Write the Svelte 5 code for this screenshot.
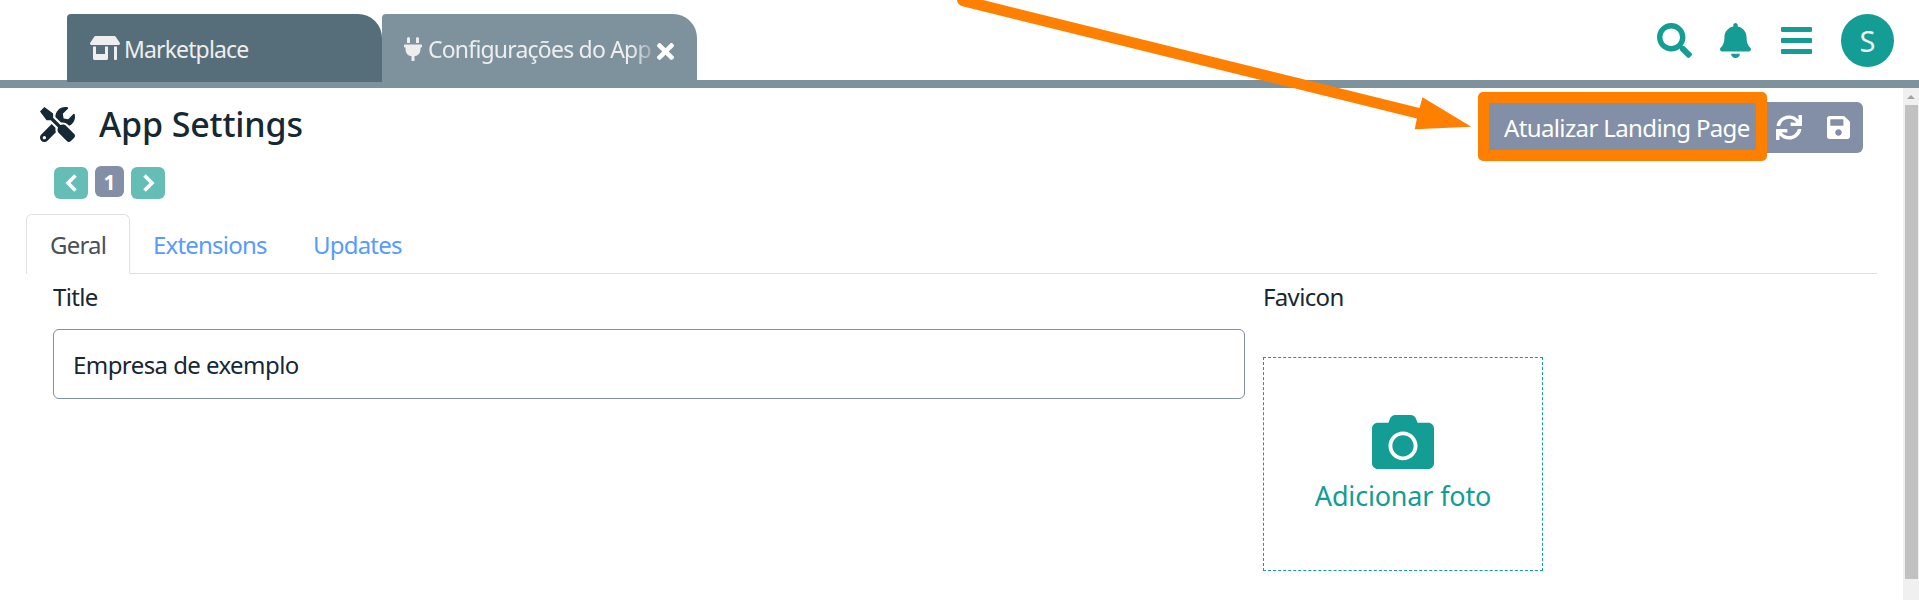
<script>
  const icons = {
    store: { box: '0 0 640 512', d: 'M320 384H128V224H64v256c0 17.7 14.3 32 32 32h256c17.7 0 32-14.3 32-32V224h-64v160zm314.6-241.8l-85.3-128c-6-8.9-16-14.2-26.7-14.2H117.4c-10.7 0-20.7 5.3-26.6 14.2l-85.3 128c-14.2 21.3 1 49.8 26.6 49.8H608c25.5 0 40.7-28.5 26.6-49.8zM512 496c0 8.8 7.2 16 16 16h32c8.8 0 16-7.2 16-16V224h-64v272z' },
    plug: { box: '0 0 384 512', d: 'M320 32a32 32 0 0 0-64 0v96h64zm48 128H16A16 16 0 0 0 0 176v32a16 16 0 0 0 16 16h16v32a160.07 160.07 0 0 0 128 156.8V512h64v-99.2A160.07 160.07 0 0 0 352 256v-32h16a16 16 0 0 0 16-16v-32a16 16 0 0 0-16-16zM128 32a32 32 0 0 0-64 0v96h64z' },
    times: { box: '0 80 352 352', d: 'M242.72 256l100.07-100.07c12.28-12.28 12.28-32.19 0-44.48l-22.24-22.24c-12.28-12.28-32.19-12.28-44.48 0L176 189.28 75.93 89.21c-12.28-12.28-32.19-12.28-44.48 0L9.21 111.45c-12.28 12.28-12.28 32.19 0 44.48L109.28 256 9.21 356.07c-12.28 12.28-12.28 32.19 0 44.48l22.24 22.24c12.28 12.28 32.2 12.28 44.48 0L176 322.72l100.07 100.07c12.28 12.28 32.2 12.28 44.48 0l22.24-22.24c12.28-12.28 12.28-32.19 0-44.48L242.72 256z' },
    search: { box: '0 0 512 512', d: 'M505 442.7L405.3 343c-4.5-4.5-10.6-7-17-7H372c27.6-35.3 44-79.7 44-128C416 93.1 322.9 0 208 0S0 93.1 0 208s93.1 208 208 208c48.3 0 92.7-16.4 128-44v16.3c0 6.4 2.5 12.5 7 17l99.7 99.7c9.4 9.4 24.6 9.4 33.9 0l28.3-28.3c9.4-9.4 9.4-24.6.1-34zM208 336c-70.7 0-128-57.2-128-128 0-70.7 57.2-128 128-128 70.7 0 128 57.2 128 128 0 70.7-57.2 128-128 128z' },
    bell: { box: '0 0 448 512', d: 'M224 512c35.32 0 63.97-28.65 63.97-64H160.03c0 35.35 28.65 64 63.97 64zm215.39-149.71c-19.32-20.76-55.47-51.99-55.47-154.29 0-77.7-54.48-139.9-127.94-155.16V32c0-17.67-14.32-32-31.98-32s-31.98 14.33-31.98 32v20.84C118.56 68.1 64.08 130.3 64.08 208c0 102.3-36.15 133.53-55.47 154.29-6 6.45-8.66 14.16-8.61 21.71.11 16.4 12.98 32 32.1 32h383.8c19.12 0 32-15.6 32.1-32 .05-7.55-2.61-15.27-8.61-21.71z' },
    bars: { box: '0 60 448 392', d: 'M16 132h416c8.837 0 16-7.163 16-16V76c0-8.837-7.163-16-16-16H16C7.163 60 0 67.163 0 76v40c0 8.837 7.163 16 16 16zm0 160h416c8.837 0 16-7.163 16-16v-40c0-8.837-7.163-16-16-16H16c-8.837 0-16 7.163-16 16v40c0 8.837 7.163 16 16 16zm0 160h416c8.837 0 16-7.163 16-16v-40c0-8.837-7.163-16-16-16H16c-8.837 0-16 7.163-16 16v40c0 8.837 7.163 16 16 16z' },
    tools: { box: '0 0 512 512', d: 'M501.1 395.7L384 278.6c-23.1-23.1-57.6-27.6-85.4-13.9L192 158.1V96L64 0 0 64l96 128h62.1l106.6 106.6c-13.6 27.8-9.2 62.3 13.9 85.4l117.1 117.1c14.6 14.6 38.2 14.6 52.7 0l52.7-52.7c14.5-14.6 14.5-38.2 0-52.7zM331.7 225c28.3 0 54.9 11 74.9 31l19.4 19.4c15.8-6.9 30.8-16.5 43.8-29.5 37.1-37.1 49.7-89.3 37.9-136.7-2.2-9-13.5-12.1-20.1-5.5l-74.4 74.4-67.9-11.3L334 98.9l74.4-74.4c6.6-6.6 3.4-17.9-5.7-20.2-47.4-11.7-99.6.9-136.6 37.9-28.5 28.5-41.9 66.1-41.2 103.6l82.1 82.1c8.1-1.9 16.5-2.9 24.7-2.9zm-103.9 82l-56.7-56.7L18.7 402.8c-25 25-25 65.5 0 90.5s65.5 25 90.5 0l123.6-123.6c-7.6-19.9-9.9-41.6-5-62.7zM64 472c-13.2 0-24-10.8-24-24 0-13.3 10.7-24 24-24s24 10.7 24 24c0 13.2-10.7 24-24 24z' },
    sync: { box: '0 0 512 512', d: 'M440.65 12.57l4 82.77A247.16 247.16 0 0 0 255.83 8C134.73 8 33.91 94.92 12.29 209.82A12 12 0 0 0 24.09 224h49.05a12 12 0 0 0 11.67-9.26 175.91 175.91 0 0 1 317-56.94l-101.46-4.86a12 12 0 0 0-12.57 12v47.41a12 12 0 0 0 12 12H500a12 12 0 0 0 12-12V12a12 12 0 0 0-12-12h-47.37a12 12 0 0 0-11.98 12.57zM255.83 432a175.61 175.61 0 0 1-146-77.8l101.8 4.87a12 12 0 0 0 12.57-12v-47.4a12 12 0 0 0-12-12H12a12 12 0 0 0-12 12V500a12 12 0 0 0 12 12h47.35a12 12 0 0 0 12-12.6l-4.15-82.57A247.17 247.17 0 0 0 255.83 504c121.11 0 221.93-86.92 243.55-201.82a12 12 0 0 0-11.8-14.18h-49.05a12 12 0 0 0-11.67 9.26A175.86 175.86 0 0 1 255.83 432z' },
    save: { box: '0 32 448 448', d: 'M433.941 129.941l-83.882-83.882A48 48 0 0 0 316.118 32H48C21.49 32 0 53.49 0 80v352c0 26.51 21.49 48 48 48h352c26.51 0 48-21.49 48-48V163.882a48 48 0 0 0-14.059-33.941zM224 416c-35.346 0-64-28.654-64-64 0-35.346 28.654-64 64-64s64 28.654 64 64c0 35.346-28.654 64-64 64zm96-304.52V212c0 6.627-5.373 12-12 12H76c-6.627 0-12-5.373-12-12V108c0-6.627 5.373-12 12-12h228.52c3.183 0 6.235 1.264 8.485 3.515l3.48 3.48A11.996 11.996 0 0 1 320 111.48z' },
    camera: { box: '0 32 512 448', d: 'M512 144v288c0 26.5-21.5 48-48 48H48c-26.5 0-48-21.5-48-48V144c0-26.5 21.5-48 48-48h88l12.3-32.9c7-18.7 24.9-31.1 44.9-31.1h125.5c20 0 37.9 12.4 44.9 31.1L376 96h88c26.5 0 48 21.5 48 48zM376 288c0-66.2-53.8-120-120-120s-120 53.8-120 120 53.8 120 120 120 120-53.8 120-120zm-32 0c0 48.5-39.5 88-88 88s-88-39.5-88-88 39.5-88 88-88 88 39.5 88 88z' }
  };
  let title = 'Empresa de exemplo';
</script>

{#snippet icon(name, w, h)}
  <svg width={w} height={h} viewBox={icons[name].box} preserveAspectRatio="none" fill="currentColor" aria-hidden="true"><path d={icons[name].d} /></svg>
{/snippet}

<div class="page">
  <header>
    <nav class="windows">
      <div class="window idle">{@render icon('store', 30, 24)}<span class="market">Marketplace</span></div>
      <div class="window current">
        {@render icon('plug', 18, 24)}<span class="config">Configurações do App</span>
        <button class="close" aria-label="Fechar">{@render icon('times', 17, 17)}</button>
      </div>
    </nav>
    <div class="actions">
      {@render icon('search', 35, 35)}
      {@render icon('bell', 31, 35)}
      {@render icon('bars', 31, 27)}
      <div class="avatar">S</div>
    </div>
  </header>

  <div class="body">
    <main>
      <div class="heading">
        {@render icon('tools', 35, 35)}
        <h1>App Settings</h1>
        <div class="toolbar">
          <button class="landing"><span>Atualizar Landing Page</span></button>
          <button class="sync" aria-label="Recarregar">{@render icon('sync', 26, 25)}</button>
          <button class="save" aria-label="Salvar">{@render icon('save', 23, 23)}</button>
        </div>
      </div>
      <div class="pager">
        <button class="step" aria-label="Anterior"><svg width="14" height="20" viewBox="0 0 14 20"><path d="M11.500 2.500 4 10l7.500 7.500" /></svg></button>
        <span class="num">1</span>
        <button class="step" aria-label="Próximo"><svg width="14" height="20" viewBox="0 0 14 20"><path d="m3.500 2.500 7.500 7.500-7.500 7.500" /></svg></button>
      </div>
      <div class="tabs">
        <span class="tab active">Geral</span>
        <span class="tab ext">Extensions</span>
        <span class="tab upd">Updates</span>
      </div>
      <div class="form">
        <div class="field">
          <label for="title">Title</label>
          <input id="title" value={title} />
        </div>
        <div class="favicon">
          <span class="label">Favicon</span>
          <div class="photo">
            {@render icon('camera', 62, 54)}
            <span>Adicionar foto</span>
          </div>
        </div>
      </div>
    </main>
    <div class="scroll"><i class="up"></i><div class="thumb"></div></div>
  </div>

  <svg class="arrow" width="1919" height="170" viewBox="0 0 1919 170" aria-hidden="true">
    <path d="M957 0Q957.500 5 962.500 6.200L1416.900 118.500 1414.700 129.300 1471.300 126.700 1422.500 97.300 1419.500 108 983 0Z" fill="#ff8000" />
  </svg>
  <div class="highlight"></div>
</div>

<style>
  :global(body) { margin: 0; background: #fff; overflow: hidden; }
  .page { position: relative; width: 1919px; height: 600px; overflow: hidden; display: flex; flex-direction: column; font-family: "Noto Sans", "Open Sans", sans-serif; font-size: 24px; color: #152833; }
  .page *, .page { box-sizing: border-box; }
  svg { display: block; flex: none; }
  button { border: 0; padding: 0; margin: 0; background: none; color: inherit; font: inherit; display: flex; align-items: center; justify-content: center; }
  span { white-space: nowrap; }

  header { height: 88px; flex: none; border-bottom: 8px solid #7d929d; display: flex; justify-content: space-between; padding: 14px 25px 0 67px; }
  .windows { display: flex; }
  .window { width: 315px; height: 68px; border-radius: 4px 24px 0 0; display: flex; align-items: center; color: #eee; line-height: 32px; }
  .idle { background: #566e79; padding: 0 0 0 23px; gap: 4px; }
  .idle svg { margin-bottom: 1px; }
  .current { background: #7d929d; padding: 2px 0 0 22px; }
  .market { font-size: 23px; letter-spacing: -.87px; padding-top: 1px; }
  .config { margin-left: 6px; width: 226px; font-size: 23px; letter-spacing: -.8px; mask-image: linear-gradient(90deg, #000 204px, transparent 232px); }
  .close { margin: 4px 0 0 3px; color: #fff; }
  .actions { display: flex; height: 53px; align-items: center; color: #139d94; }
  .actions svg:nth-child(2) { margin-left: 28px; }
  .actions svg:nth-child(3) { margin-left: 30px; }
  .avatar { width: 53px; height: 53px; margin-left: 29px; border-radius: 50%; background: #139d94; color: #eee; text-align: center; font-size: 29px; line-height: 54px; }

  .body { flex: 1; display: flex; min-height: 0; }
  main { flex: 1; padding: 14px 26px 0; }
  .heading { height: 51px; display: flex; align-items: center; padding: 0 14px; }
  h1 { margin: -8px auto 0 24px; font-size: 34px; font-weight: 500; line-height: 46px; letter-spacing: -.15px; white-space: nowrap; }
  .heading > svg { align-self: flex-start; margin-top: 4.500px; }
  .toolbar { display: flex; height: 51px; width: 379px; background: #838fa7; border-radius: 6px; color: #fff; }
  .landing { width: 286px; justify-content: flex-start; padding-left: 20px; letter-spacing: -.63px; }
  .sync { margin-left: 6px; }
  .save { margin-left: 25px; }

  .pager { display: flex; gap: 7px; padding: 13px 0 0 28px; height: 61px; }
  .step { width: 34px; height: 32px; margin-top: 1px; border-radius: 6px; background: #64beb6; }
  .step path { fill: none; stroke: #fff; stroke-width: 3.6; }
  .num { width: 29px; height: 31px; border-radius: 6px; background: #838fa7; color: #fff; font-weight: 700; font-size: 21px; line-height: 32px; text-align: center; }

  .tabs { display: flex; height: 60px; border-bottom: 1px solid #dee2e6; }
  .tab { height: 60px; line-height: 34px; padding: 14px 0 0 23px; color: #579bfe; letter-spacing: -.8px; }
  .active { width: 104px; padding-left: 23px; border: 1px solid #dee2e6; border-bottom-color: #fff; border-radius: 6px 6px 0 0; color: #495057; padding-top: 13px; background: #fff; }
  .ext { width: 137px; }
  .upd { padding-left: 46px; }

  .form { display: flex; padding: 0 27px; gap: 18px; }
  .field { width: 1192px; display: flex; flex-direction: column; }
  label, .label { display: block; height: 55px; padding-top: 6px; line-height: 34px; letter-spacing: -.65px; }
  input { height: 70px; border: 1px solid #838fa7; border-radius: 6px; padding: 0 0 0 19px; font: inherit; color: inherit; letter-spacing: -.57px; outline: 0; background: #fff; }
  .photo { width: 280px; height: 214px; margin-top: 28px; border: 1px dashed #139d94; color: #139d94; display: flex; flex-direction: column; align-items: center; padding-top: 57px; font-size: 27px; line-height: 40px; letter-spacing: -.18px; }
  .photo span { margin-top: 7px; }

  .scroll { width: 16px; background: #f0f0f0; display: flex; flex-direction: column; align-items: center; padding-top: 7px; }
  .up { border: 4px solid transparent; border-top: 0; border-bottom: 4px solid #a3a3a3; height: 4px; width: 8px; }
  .thumb { width: 13px; height: 474px; margin-top: 6px; background: #c1c1c1; }

  .arrow { position: absolute; left: 0; top: 0; }
  .highlight { position: absolute; left: 1478px; top: 92px; width: 289px; height: 69px; border: 11px solid #ff8000; border-radius: 5px; }
</style>
